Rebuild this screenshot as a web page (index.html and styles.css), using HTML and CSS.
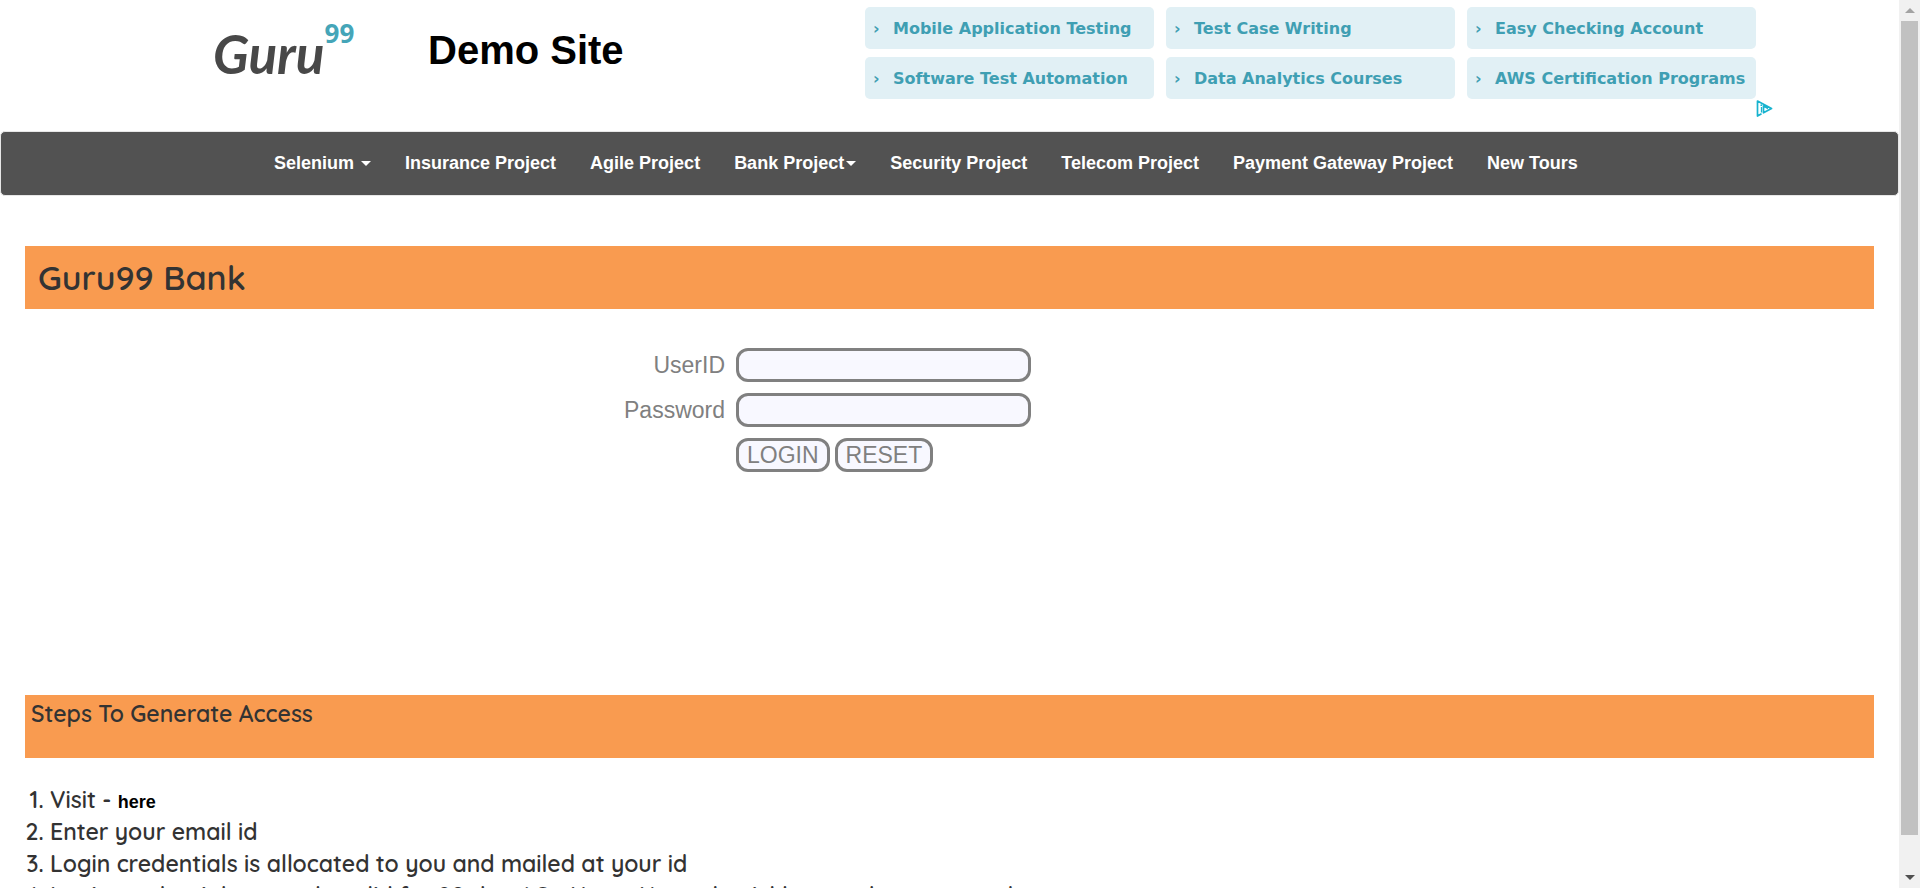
FILE: index.html
```html
<!DOCTYPE html>
<html lang="en">
<head>
<meta charset="utf-8">
<title>Guru99 Bank Home Page</title>
<link rel="stylesheet" href="styles.css">
</head>
<body>
<div class="page">
  <header class="header">
    <a class="logo" href="#"><span class="logo-word">Guru</span><span class="logo-num">99</span></a>
    <h2 class="site-title">Demo Site</h2>
    <div class="ads">
      <a class="ad" href="#"><span class="ad-arrow">›</span>Mobile Application Testing</a>
      <a class="ad" href="#"><span class="ad-arrow">›</span>Test Case Writing</a>
      <a class="ad" href="#"><span class="ad-arrow">›</span>Easy Checking Account</a>
      <a class="ad" href="#"><span class="ad-arrow">›</span>Software Test Automation</a>
      <a class="ad" href="#"><span class="ad-arrow">›</span>Data Analytics Courses</a>
      <a class="ad" href="#"><span class="ad-arrow">›</span>AWS Certification Programs</a>
      <svg class="ad-choices" viewBox="0 0 17 17" width="17" height="17" aria-hidden="true">
        <path d="M5.500 13.800 1.500 16V1L15.500 8.500 7.500 12.800V5.800L12 8.500" fill="none" stroke="#17b3cf" stroke-width="1.700" stroke-linejoin="round"/>
        <path d="M5.500 7v5.500" stroke="#17b3cf" stroke-width="1.300"/>
        <circle cx="5.300" cy="5.200" r=".9" fill="#17b3cf"/>
      </svg>
    </div>
  </header>

  <nav class="nav">
    <a class="nav-link" href="#">Selenium <span class="caret"></span></a>
    <a class="nav-link" href="#">Insurance Project</a>
    <a class="nav-link" href="#">Agile Project</a>
    <a class="nav-link" href="#">Bank Project<span class="caret"></span></a>
    <a class="nav-link" href="#">Security Project</a>
    <a class="nav-link" href="#">Telecom Project</a>
    <a class="nav-link" href="#">Payment Gateway Project</a>
    <a class="nav-link" href="#">New Tours</a>
  </nav>

  <main class="main">
    <h1 class="banner banner-title">Guru99 Bank</h1>
    <form class="login">
      <label class="login-label" for="uid">UserID</label>
      <input class="field" id="uid" type="text">
      <label class="login-label" for="password">Password</label>
      <input class="field" id="password" type="password">
      <div class="actions">
        <button class="btn" type="button">LOGIN</button>
        <button class="btn" type="reset">RESET</button>
      </div>
    </form>
    <h2 class="banner banner-steps">Steps To Generate Access</h2>
    <ol class="steps">
      <li>Visit - <a class="here" href="#">here</a></li>
      <li>Enter your email id</li>
      <li>Login credentials is allocated to you and mailed at your id</li>
      <li>Login credentials are only valid for 20 days! So Hurry Up and quickly complete your tasks</li>
    </ol>
  </main>
</div>
<div class="scrollbar" aria-hidden="true">
  <div class="scroll-cap"><span class="scroll-up"></span></div>
  <div class="scroll-track"><div class="scroll-thumb"></div></div>
  <div class="scroll-cap"><span class="scroll-down"></span></div>
</div>
</body>
</html>
```

FILE: styles.css
```css
* { box-sizing: border-box; }

body {
  display: flex;
  height: 100vh;
  margin: 0;
  overflow: hidden;
  background: #fff;
  color: #333;
  font-family: "Liberation Sans", Arial, sans-serif;
}

a { text-decoration: none; }

.page { flex: 1; min-width: 0; overflow: hidden; }

/* Header */
.header {
  display: flex;
  align-items: flex-start;
  height: 131px;
  padding: 7px 126px 0 213px;
}

.logo {
  display: flex;
  align-items: flex-start;
  width: 215px;
  padding-top: 14px;
}

.logo-word {
  color: #484848;
  font: italic 700 53px/66px Lato, sans-serif;
}

.logo-num {
  color: #45a5b8;
  font: 700 26px/24px "Open Sans", sans-serif;
}

.site-title {
  margin: 0;
  padding-top: 20px;
  color: #000;
  font-size: 40px;
  line-height: 46px;
}

.ads {
  position: relative;
  display: grid;
  grid-template-columns: repeat(3, 289px);
  gap: 8px 12px;
  margin-left: auto;
  padding-right: 17px;
}

.ad {
  display: flex;
  align-items: center;
  height: 42px;
  padding: 2px 0 0 8px;
  border-radius: 5px;
  background: #e1f0f5;
  color: #3f9fb3;
  font: bold 16px/20px Verdana, "DejaVu Sans", sans-serif;
  white-space: nowrap;
}

.ad-arrow { width: 20px; }

.ad-choices { position: absolute; right: 0; bottom: -18px; }

/* Navigation */
.nav {
  display: flex;
  align-items: center;
  gap: 34px;
  height: 65px;
  padding: 0 0 2px 273px;
  border: 1px solid #e7e7e7;
  border-radius: 5px;
  background: #525252;
}

.nav-link {
  color: #fff;
  font-size: 18px;
  font-weight: bold;
  line-height: 24px;
  white-space: nowrap;
}

.caret {
  display: inline-block;
  margin-left: 2px;
  border: 5px solid transparent;
  border-top-color: #fff;
  border-bottom: 0;
  vertical-align: middle;
}

/* Content */
.main { padding: 50px 25px 0; }

.banner {
  height: 63px;
  margin: 0;
  background: #f99b50;
  color: #333;
  font-family: Quicksand, Lato, sans-serif;
  font-weight: 600;
}

.banner-title { padding-left: 13px; font-size: 34px; line-height: 63px; }
.banner-steps { padding: 5px 6px; font-size: 23px; line-height: 28px; }

.login {
  display: grid;
  grid-template-columns: 700px 295px;
  grid-auto-rows: 34px;
  gap: 11px;
  align-items: center;
  height: 386px;
  padding-top: 39px;
  align-content: start;
  color: #808080;
  font-size: 23px;
}

.login-label { text-align: right; }

.field,
.btn {
  height: 34px;
  margin: 0;
  border: 3px solid #808080;
  border-radius: 12px;
  background: #f8f8ff;
  color: #808080;
  font: 23px/28px "Liberation Sans", Arial, sans-serif;
}

.field { width: 100%; padding: 0 8px; }
.btn { padding: 0 8px; }

.actions { display: flex; grid-column: 2; gap: 5px; }

.steps {
  margin: 0;
  padding: 26px 0 0 25px;
  font: 600 23px/32px Quicksand, Lato, sans-serif;
}

.here {
  color: #000;
  font: bold 18px/20px "Liberation Sans", Arial, sans-serif;
}

/* Scroll bar */
.scrollbar {
  display: flex;
  flex-direction: column;
  width: 21px;
  background: #f1f1f1;
}

.scroll-cap {
  display: flex;
  align-items: center;
  justify-content: center;
  height: 21px;
}

.scroll-track { flex: 1; padding: 0 2px; }
.scroll-thumb { height: 96.2%; background: #c1c1c1; }

.scroll-up,
.scroll-down { border: 5px solid transparent; }
.scroll-up { border-top: 0; border-bottom-color: #a3a3a3; }
.scroll-down { border-bottom: 0; border-top-color: #505050; }
```
